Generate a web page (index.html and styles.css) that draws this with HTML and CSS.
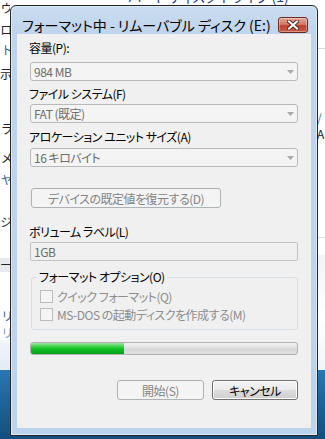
FILE: index.html
```html
<!DOCTYPE html>
<html lang="ja">
<head>
  <meta charset="UTF-8" />
  <meta name="viewport" content="width=device-width, initial-scale=1.0"/>
  <title>フォーマット - リムーバブル ディスク (E:)</title>
  <link rel="stylesheet" href="styles.css">
</head>
<body>
<div class="screen">

  <!-- Explorer window behind the dialog -->
  <div class="explorer">
    <div class="crumbs">ハード ディスク ドライブ (1)</div>
    <div class="explorer-body">
      <ul class="edge edge-left">
        <li>ウ</li>
        <li>ロ</li>
        <li class="link">ト</li>
        <li>示</li>
        <li>ラ</li>
        <li>メ</li>
        <li class="link">ヤ</li>
        <li>ジ</li>
        <li class="band">ー</li>
        <li class="link">リ</li>
        <li class="link faint">リ</li>
      </ul>
      <div class="edge edge-right">
        <div class="rule"></div>
        <div class="slash">/</div>
        <div class="letter">A</div>
        <div class="rule low"></div>
        <div class="shade"></div>
      </div>
    </div>
  </div>
  <div class="desktop"></div>

  <!-- Format dialog -->
  <div class="dialog">
    <div class="titlebar">
      <span class="title">フォーマット中 - リムーバブル ディスク (E:)</span>
      <button class="close-btn" aria-label="閉じる">
        <svg width="12" height="10" viewBox="0 0 12 10">
          <path d="M2 1.5 L10 8.5 M10 1.5 L2 8.5" stroke="#5a2a24" stroke-width="4" stroke-linecap="square"/>
          <path d="M2 1.5 L10 8.5 M10 1.5 L2 8.5" stroke="#ffffff" stroke-width="2" stroke-linecap="square"/>
        </svg>
      </button>
    </div>

    <div class="client">
      <div class="field-label first">容量(P):</div>
      <div class="combo c1"><span>984 MB</span><svg class="arrow" width="7" height="4" viewBox="0 0 7 4"><path d="M0 0 H7 L3.5 4 Z" fill="#a9a9a9"/></svg></div>

      <div class="field-label l2">ファイル システム(F)</div>
      <div class="combo c2"><span>FAT (既定)</span><svg class="arrow" width="7" height="4" viewBox="0 0 7 4"><path d="M0 0 H7 L3.5 4 Z" fill="#a9a9a9"/></svg></div>

      <div class="field-label l3">アロケーション ユニット サイズ(A)</div>
      <div class="combo c3"><span>16 キロバイト</span><svg class="arrow" width="7" height="4" viewBox="0 0 7 4"><path d="M0 0 H7 L3.5 4 Z" fill="#a9a9a9"/></svg></div>

      <button class="btn btn-disabled restore">デバイスの既定値を復元する(D)</button>

      <div class="field-label l4">ボリューム ラベル(L)</div>
      <div class="textbox">1GB</div>

      <fieldset class="options">
        <legend>フォーマット オプション(O)</legend>
        <label class="check"><span class="box"></span>クイック フォーマット(Q)</label>
        <label class="check"><span class="box"></span>MS-DOS の起動ディスクを作成する(M)</label>
      </fieldset>

      <div class="progress"><div class="fill" style="width:35%"></div></div>

      <div class="actions">
        <button class="btn btn-disabled">開始(S)</button>
        <button class="btn btn-normal">キャンセル</button>
      </div>
    </div>
  </div>

</div>
</body>
</html>
```

FILE: styles.css
```css
* {
  box-sizing: border-box;
}
body {
  margin: 0;
  width: 325px;
  height: 439px;
  overflow: hidden;
  font-family: "Noto Sans CJK JP", sans-serif;
  font-size: 12px;
  font-feature-settings: "palt";
}
.screen {
  position: relative;
  width: 325px;
  height: 439px;
  display: flex;
  flex-direction: column;
  background: #fff;
}

/* background explorer */
.explorer {
  height: 370px;
  display: flex;
  flex-direction: column;
  background: linear-gradient(#fff 335px, #eef3f8 345px, #e4ecf4);
}
.crumbs {
  margin-top: -11px;
  margin-left: 128px;
  height: 14px;
  line-height: 14px;
  font-size: 14px;
  color: #1e3a8a;
  white-space: nowrap;
}
.explorer-body {
  flex: 1;
  display: flex;
  justify-content: space-between;
}
.edge {
  list-style: none;
  margin: 0;
  padding: 0;
  overflow: hidden;
}
.edge-left {
  width: 10px;
  display: grid;
  grid-template-rows: 22px 20px 24px 55px 29px 22px 42px 44px 50px 17px 15px;
  align-content: start;
  margin-top: -3px;
}
.edge-left li {
  display: flex;
  justify-content: flex-end;
  white-space: nowrap;
  line-height: 16px;
  font-size: 12px;
  color: #222;
}
.edge-left li.link {
  color: #2c5fa0;
}
.edge-left li.faint {
  color: #7a9cc6;
}
.edge-left li.band {
  background: #e7ebf0;
  height: 14px;
  line-height: 14px;
}
.edge-right {
  width: 8px;
  display: flex;
  flex-direction: column;
}
.edge-right .rule {
  margin-top: 45px;
  height: 1px;
  background: #d8d8d8;
}
.edge-right .slash {
  margin-top: 62px;
  height: 14px;
  color: #3c6fb0;
  line-height: 14px;
}
.edge-right .letter {
  margin-top: 2px;
  height: 14px;
  line-height: 14px;
  color: #222;
}
.edge-right .rule.low {
  margin-top: 96px;
  background: #e0e0e0;
}
.edge-right .shade {
  margin-top: 17px;
  flex: 1;
  background: linear-gradient(#f3f3f3, #fff 60px, #f1f4f8);
}
.desktop {
  flex: 1;
  background: linear-gradient(#2a77b3, #1b5f93 40px, #134f7d);
}

/* dialog window */
.dialog {
  position: absolute;
  left: 10px;
  top: 5px;
  width: 308px;
  height: 431px;
  border: 1px solid #252525;
  border-radius: 6px 6px 0 0;
  background: linear-gradient(#cadcf0, #bed4ec 30px, #bcd3ec);
  box-shadow: inset 0 0 0 1px #dfeaf7;
  padding: 0 6px 7px;
  display: flex;
  flex-direction: column;
}
.titlebar {
  height: 28px;
  padding: 9px 3px 0 5px;
  display: flex;
  align-items: center;
  justify-content: space-between;
}
.title {
  font-size: 14px;
  color: #000;
  white-space: nowrap;
}
.close-btn {
  width: 30px;
  height: 16px;
  padding: 0;
  border: 1px solid #6d2a22;
  border-radius: 3px;
  background: linear-gradient(#e4a496, #d37a6a 45%, #c0422f 55%, #c65a45);
  box-shadow: inset 0 0 0 1px rgba(255, 255, 255, 0.35);
  display: flex;
  align-items: center;
  justify-content: center;
}

.client {
  flex: 1;
  background: #f0f0f0;
  padding: 0 13px;
  display: flex;
  flex-direction: column;
  color: #000;
  letter-spacing: -0.5px;
}
.field-label {
  height: 16px;
  line-height: 16px;
  margin-left: -1px;
  white-space: nowrap;
}
.field-label.first {
  margin-top: 6px;
}
.field-label.l2 {
  margin-top: 5px;
}
.field-label.l3 {
  margin-top: 6px;
}
.field-label.l4 {
  margin-top: 16px;
}
.combo {
  height: 19px;
  border: 1px solid #b9b9b9;
  border-radius: 3px;
  background: #f4f4f4;
  color: #6d6d6d;
  display: flex;
  align-items: center;
  justify-content: space-between;
  padding: 0 2px 0 3px;
}
.combo.c1 {
  margin-top: 6px;
}
.combo.c2 {
  margin-top: 2px;
}
.combo.c3 {
  margin-top: 3px;
}
.combo .arrow {
  margin-right: 1px;
}
.textbox {
  margin-top: 2px;
  height: 19px;
  border: 1px solid #c3c3c3;
  border-radius: 2px;
  background: #f0f0f0;
  color: #6d6d6d;
  line-height: 17px;
  padding: 0 3px;
}

.btn {
  font-family: inherit;
  font-size: 12px;
  height: 20px;
  padding: 0;
  border-radius: 3px;
  font-feature-settings: "palt";
  letter-spacing: -0.5px;
}
.btn-disabled {
  border: 1px solid #adb2b5;
  background: #f4f4f4;
  color: #838383;
}
.btn-normal {
  border: 1px solid #707070;
  background: linear-gradient(#f2f2f2, #ebebeb 50%, #dddddd 50%, #cfcfcf);
  box-shadow: inset 0 0 0 1px #fcfcfc;
  color: #000;
}
.restore {
  margin-top: 21px;
  margin-left: 1px;
  width: 190px;
}

.options {
  margin: 8px 0 0 1px;
  padding: 2px 8px 6px;
  border: 1px solid #d5dfe5;
  border-radius: 3px;
}
.options legend {
  margin-left: -3px;
  padding: 0 2px;
  height: 16px;
  line-height: 16px;
}
.check {
  height: 18px;
  display: flex;
  align-items: center;
  gap: 4px;
  color: #8d8d8d;
  white-space: nowrap;
}
.check .box {
  width: 13px;
  height: 13px;
  border: 1px solid #bcbcbc;
  background: #f4f4f4;
}

.progress {
  margin-top: 12px;
  height: 13px;
  border: 1px solid #b2b2b2;
  border-radius: 3px;
  background: linear-gradient(#f2f2f2, #e2e2e2 45%, #d6d6d6 55%, #e0e0e0);
  overflow: hidden;
}
.fill {
  height: 100%;
  background: linear-gradient(#9fe69c, #37d045 35%, #0ec022 55%, #06a01a);
}

.actions {
  margin-top: 25px;
  display: flex;
  justify-content: flex-end;
  gap: 8px;
}
.actions .btn-disabled {
  width: 87px;
}
.actions .btn-normal {
  width: 86px;
}
```
